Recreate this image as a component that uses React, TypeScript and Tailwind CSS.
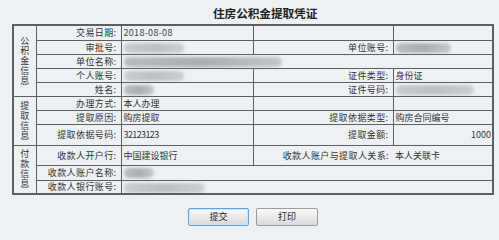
import React from 'react'

const font = { fontFamily: '"Noto Sans CJK SC", "Noto Sans", sans-serif' }

function Blur({ w, tone = 'mid' }: { w: string; tone?: 'mid' | 'dark' }) {
  return (
    <span
      className={`inline-block h-[10px] align-middle rounded-full blur-[1.5px] ${w} ${
        tone === 'dark'
          ? 'bg-gradient-to-r from-[#b9bdc1] via-[#a9adb1] to-[#c4c8cc]'
          : 'bg-gradient-to-r from-[#c9cdd1] via-[#bcc0c4] to-[#ccd0d4]'
      }`}
    />
  )
}

const td = 'border border-[#5f5f5f] p-0 leading-[11px] overflow-hidden'
const label = `${td} text-right pr-[4px] text-[9px] tracking-[0.4px] text-[#333] whitespace-nowrap`
const value = `${td} pl-[2px] text-[9px] text-[#333] whitespace-nowrap`

function Group({ text, rows }: { text: string; rows: number }) {
  return (
    <td rowSpan={rows} className={`${td} text-center align-middle`}>
      <div className="mx-auto w-[9px] break-all text-[9px] leading-[10px] text-[#333]">{text}</div>
    </td>
  )
}

export default function App() {
  return (
    <div className="w-[499px] h-[240px] bg-[#edf1f4] overflow-hidden" style={font}>
      <div className="h-[24px] pl-[213px] pt-[6px] text-[11.7px] leading-[14px] font-bold text-[#222] tracking-[-0.1px]">
        住房公积金提取凭证
      </div>

      <table className="ml-[12px] w-[480px] table-fixed border-collapse border-2 border-[#5f5f5f]">
        <colgroup>
          <col className="w-[23px]" />
          <col className="w-[85px]" />
          <col className="w-[132px]" />
          <col className="w-[140px]" />
          <col className="w-[100px]" />
        </colgroup>
        <tbody>
          <tr className="h-[15px]">
            <Group text="公积金信息" rows={5} />
            <td className={label}>交易日期:</td>
            <td className={`${value} text-[8px] tracking-[0.3px] text-[#444]`}>2018-08-08</td>
            <td className={label}></td>
            <td className={value}></td>
          </tr>
          <tr className="h-[14px]">
            <td className={label}>审批号:</td>
            <td className={value}><Blur w="w-[60px]" /></td>
            <td className={label}>单位账号:</td>
            <td className={value}><Blur w="w-[55px]" tone="dark" /></td>
          </tr>
          <tr className="h-[14px]">
            <td className={label}>单位名称:</td>
            <td className={value} colSpan={3}><Blur w="w-[158px]" tone="dark" /></td>
          </tr>
          <tr className="h-[14px]">
            <td className={label}>个人账号:</td>
            <td className={value}><Blur w="w-[60px]" /></td>
            <td className={label}>证件类型:</td>
            <td className={value}>身份证</td>
          </tr>
          <tr className="h-[14px]">
            <td className={label}>姓名:</td>
            <td className={value}><Blur w="w-[30px]" tone="dark" /></td>
            <td className={label}>证件号码:</td>
            <td className={value}><Blur w="w-[78px]" /></td>
          </tr>

          <tr className="h-[14px]">
            <Group text="提取信息" rows={3} />
            <td className={label}>办理方式:</td>
            <td className={value}>本人办理</td>
            <td className={label}></td>
            <td className={value}></td>
          </tr>
          <tr className="h-[14px]">
            <td className={label}>提取原因:</td>
            <td className={value}>购房提取</td>
            <td className={label}>提取依据类型:</td>
            <td className={value}>购房合同编号</td>
          </tr>
          <tr className="h-[21px]">
            <td className={label}>提取依据号码:</td>
            <td className={`${value} text-[8px] tracking-[-0.6px] text-[#2b3a5a]`}>32123123</td>
            <td className={label}>提取金额:</td>
            <td className={`${value} text-right pr-[1px] text-[8px] text-[#333]`}>1000</td>
          </tr>

          <tr className="h-[20px]">
            <Group text="付款信息" rows={3} />
            <td className={label}>收款人开户行:</td>
            <td className={value}>中国建设银行</td>
            <td className={`${label} border-r-0`}>收款人账户与提取人关系:</td>
            <td className={`${value} border-l-0`}>本人关联卡</td>
          </tr>
          <tr className="h-[15px]">
            <td className={label}>收款人账户名称:</td>
            <td className={value} colSpan={3}><Blur w="w-[30px]" tone="dark" /></td>
          </tr>
          <tr className="h-[14px]">
            <td className={label}>收款人银行账号:</td>
            <td className={value} colSpan={3}><Blur w="w-[81px]" /></td>
          </tr>
        </tbody>
      </table>

      <div className="flex gap-[7px] pl-[188px] pt-[13px]">
        <button className="w-[61px] h-[18px] rounded-[2px] border border-[#5ea3de] bg-gradient-to-b from-[#fafafa] to-[#d9d9d9] text-[9px] text-[#222] shadow-[inset_0_0_0_1px_#cfe3f5]">
          提交
        </button>
        <button className="w-[62px] h-[18px] rounded-[2px] border border-[#9a9a9a] bg-gradient-to-b from-[#fafafa] to-[#d9d9d9] text-[9px] text-[#222]">
          打印
        </button>
      </div>
    </div>
  )
}
